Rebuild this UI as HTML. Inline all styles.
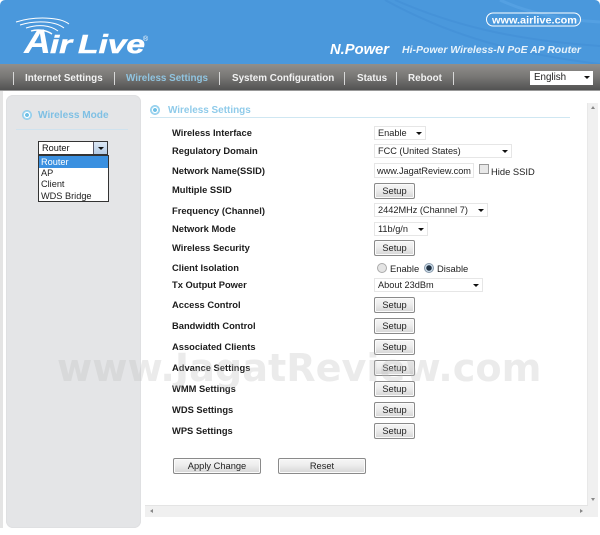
<!DOCTYPE html>
<html><head><meta charset="utf-8">
<style>
html,body{margin:0;padding:0;background:#fff}
#p{position:relative;width:600px;height:535px;overflow:hidden;background:#fff;font-family:"Liberation Sans",Arial,sans-serif;color:#111;filter:blur(.3px)}
#p>*,.a{position:absolute}
.t{white-space:nowrap}
.l{left:172px;font-size:9.35px;font-weight:bold;line-height:12px;white-space:nowrap;color:#1c1c1c}
.s{left:374px;width:40px;height:14px;box-sizing:border-box;background:#fff;border:1px solid #e6e6e6;font-size:9.2px;line-height:13px;padding-left:3px;white-space:nowrap;color:#222}
.s:after{content:"";position:absolute;right:3px;top:5px;border:3px solid transparent;border-top:3px solid #111;border-bottom:0}
.b{left:374px;width:41px;height:16px;box-sizing:border-box;border:1px solid #8a8a8a;border-radius:2px;background:linear-gradient(#f6f6f6,#ededed 45%,#d6d6d6);box-shadow:inset 0 0 0 1px #fbfbfb;font-size:9.3px;line-height:15px;text-align:center;color:#222}
.n{top:72px;font-size:9.85px;font-weight:bold;line-height:13px;color:#f2f2f2;white-space:nowrap}
.sep{top:72px;width:1px;height:13px;background:#d8d8d8}
.r{width:10px;height:10px;border-radius:50%;box-sizing:border-box}
.ic{width:10px;height:10px;border-radius:50%;border:1px solid #8fcdec;box-sizing:border-box;background:radial-gradient(circle,#6fc0e6 0 1.8px,#fff 2.1px 2.9px,#a9daf1 3.2px)}
</style></head><body><div id="p">

<div style="left:0;top:0;width:600px;height:65px;background:#4a98dc;border-radius:5px 5px 0 0"></div>
<svg style="left:0;top:0" width="600" height="65">
<defs><linearGradient id="f" x1="0" y1="0" x2="0" y2="1"><stop offset="0" stop-color="#fff"/><stop offset=".8" stop-color="#fff"/><stop offset="1" stop-color="#a9d0f0"/></linearGradient></defs>
<g fill="none" stroke="#4592d8" stroke-width="2"><path d="M385 0C440 30 500 52 600 64"/><path d="M395 0C450 24 510 40 600 46"/></g>
<g fill="none" stroke="#54a0e2" stroke-width="3"><path d="M500 0C530 14 565 20 600 22"/></g>
<g fill="none" stroke="#fff" stroke-width="1"><path d="M16 22C35 16 60 17 69 24"/><path d="M20 25C36 20 55 21 64 28"/><path d="M26 28C38 24 50 25 58 31"/><path d="M31 31C38 29 46 30 52 34" stroke-width="1.4"/></g>
<text x="24" y="53" font-family="Liberation Sans" font-size="34" font-weight="bold" font-style="italic" fill="url(#f)" textLength="27" lengthAdjust="spacingAndGlyphs">A</text>
<text x="50" y="53" font-family="Liberation Sans" font-size="25" font-weight="bold" font-style="italic" fill="url(#f)" stroke="#fff" stroke-width=".5" textLength="22" lengthAdjust="spacingAndGlyphs">ir</text>
<text x="78" y="53" font-family="Liberation Sans" font-size="26" font-weight="bold" font-style="italic" fill="url(#f)" stroke="#fff" stroke-width=".5" textLength="67" lengthAdjust="spacingAndGlyphs">Live</text>
<text x="143" y="41" font-family="Liberation Sans" font-size="7" fill="#fff">®</text>
<rect x="486.5" y="13" width="94" height="13" rx="6.5" fill="none" stroke="#fff" stroke-width="1"/>
<text x="492" y="23.5" font-family="Liberation Sans" font-size="10.5" font-weight="bold" fill="#fff" textLength="85" lengthAdjust="spacingAndGlyphs">www.airlive.com</text>
<text x="330" y="54" font-family="Liberation Sans" font-size="14.5" font-weight="bold" font-style="italic" fill="#fff" textLength="59" lengthAdjust="spacingAndGlyphs">N.Power</text>
<text x="402" y="53" font-family="Liberation Sans" font-size="10.5" font-weight="bold" font-style="italic" fill="#e8f3fb" textLength="179" lengthAdjust="spacingAndGlyphs">Hi-Power Wireless-N PoE AP Router</text>
</svg>

<div style="left:0;top:64px;width:600px;height:26px;background:linear-gradient(#908f8c,#777674 50%,#525252)"></div>
<div style="left:0;top:90px;width:600px;height:1px;background:#999"></div>
<div class="sep" style="left:13px"></div>
<div class="n" style="left:25px">Internet Settings</div>
<div class="sep" style="left:114px"></div>
<div class="n" style="left:126px;color:#90c4e0">Wireless Settings</div>
<div class="sep" style="left:219px"></div>
<div class="n" style="left:232px">System Configuration</div>
<div class="sep" style="left:344px"></div>
<div class="n" style="left:357px">Status</div>
<div class="sep" style="left:396px"></div>
<div class="n" style="left:408px">Reboot</div>
<div class="sep" style="left:453px"></div>
<div class="s" style="left:530px;top:71px;width:63px;height:14px;border:0;line-height:14px;font-size:9.8px;padding-left:4px">English</div>

<div style="left:0;top:91px;width:3px;height:440px;background:#e4e4e4"></div>
<div style="left:0;top:528px;width:600px;height:7px;background:#fff"></div>

<div style="left:6px;top:95px;width:135px;height:433px;background:#e4e5e7;border-radius:7px;box-shadow:inset 0 0 0 1px #dfe0e2"></div>
<div class="ic" style="left:22px;top:110px"></div>
<div class="t" style="left:38px;top:109px;font-size:10.1px;font-weight:bold;line-height:14px;color:#7fc0e4">Wireless Mode</div>
<div style="left:16px;top:129px;width:112px;height:1px;background:#cfe2ee"></div>

<div style="left:38px;top:141px;width:70px;height:14px;box-sizing:border-box;border:1px solid #333;background:#fff;font-size:9.2px;line-height:13px;padding-left:3px">Router
<div class="a" style="right:0;top:0;width:13px;height:12px;background:linear-gradient(#dce8f5,#b4cbe4);border-left:1px solid #556"></div>
<div class="a" style="right:3px;top:5px;border:3px solid transparent;border-top:3px solid #111;border-bottom:0"></div></div>
<div style="left:38px;top:155px;width:71px;height:47px;box-sizing:border-box;border:1px solid #333;background:#fff;font-size:9.2px;line-height:11.3px;color:#222">
<div style="background:#3a90e0;color:#fff;padding-left:2px;height:12px;line-height:12px">Router</div>
<div style="padding-left:2px">AP</div><div style="padding-left:2px">Client</div><div style="padding-left:2px">WDS Bridge</div></div>

<div class="ic" style="left:150px;top:105px"></div>
<div class="t" style="left:168px;top:104px;font-size:9.95px;font-weight:bold;line-height:14px;color:#8fcbea">Wireless Settings</div>
<div style="left:150px;top:117px;width:420px;height:1px;background:#cfe7f2"></div>

<div class="l" style="top:127px">Wireless Interface</div>
<div class="l" style="top:145px">Regulatory Domain</div>
<div class="l" style="top:165px">Network Name(SSID)</div>
<div class="l" style="top:184px">Multiple SSID</div>
<div class="l" style="top:205px">Frequency (Channel)</div>
<div class="l" style="top:223px">Network Mode</div>
<div class="l" style="top:242px">Wireless Security</div>
<div class="l" style="top:262px">Client Isolation</div>
<div class="l" style="top:279px">Tx Output Power</div>
<div class="l" style="top:299px">Access Control</div>
<div class="l" style="top:320px">Bandwidth Control</div>
<div class="l" style="top:341px">Associated Clients</div>
<div class="l" style="top:362px">Advance Settings</div>
<div class="l" style="top:383px">WMM Settings</div>
<div class="l" style="top:404px">WDS Settings</div>
<div class="l" style="top:425px">WPS Settings</div>

<div class="s" style="top:126px;width:52px">Enable</div>
<div class="s" style="top:144px;width:138px">FCC (United States)</div>
<div class="t" style="left:374px;top:163px;width:100px;height:15px;box-sizing:border-box;border:1px solid #e6e6e6;font-size:9.2px;line-height:14px;padding-left:2px;color:#222">www.JagatReview.com</div>
<div style="left:479px;top:164px;width:10px;height:10px;box-sizing:border-box;border:1px solid #999;background:#e8e8e8"></div>
<div class="t" style="left:491px;top:165px;font-size:9.4px;line-height:14px;color:#222">Hide SSID</div>
<div class="b" style="top:183px">Setup</div>
<div class="s" style="top:203px;width:114px">2442MHz (Channel 7)</div>
<div class="s" style="top:222px;width:54px">11b/g/n</div>
<div class="b" style="top:240px">Setup</div>
<div class="r" style="left:377px;top:263px;border:1px solid #aaa;background:#e4e4e4"></div>
<div class="t" style="left:390px;top:262px;font-size:9.4px;line-height:14px;color:#222">Enable</div>
<div class="r" style="left:424px;top:263px;border:1px solid #89a;background:radial-gradient(circle,#234 0 2.5px,#cfe0ee 3px)"></div>
<div class="t" style="left:437px;top:262px;font-size:9.4px;line-height:14px;color:#222">Disable</div>
<div class="s" style="top:278px;width:109px">About 23dBm</div>
<div class="b" style="top:297px">Setup</div>
<div class="b" style="top:318px">Setup</div>
<div class="b" style="top:339px">Setup</div>
<div class="b" style="top:360px">Setup</div>
<div class="b" style="top:381px">Setup</div>
<div class="b" style="top:402px">Setup</div>
<div class="b" style="top:423px">Setup</div>
<div class="b" style="left:173px;top:458px;width:88px">Apply Change</div>
<div class="b" style="left:278px;top:458px;width:88px">Reset</div>

<div class="t" style="left:57px;top:347px;font:bold 38.2px/44px 'DejaVu Sans',sans-serif;color:rgba(190,190,190,.3)">www.JagatReview.com</div>

<div style="left:588px;top:103px;width:10px;height:402px;background:#f0f0f0"></div>
<div style="left:145px;top:505px;width:453px;height:12px;background:#f0f0f0"></div>
<div style="left:145px;top:505px;width:443px;height:1px;background:#e4e4e4"></div>
<div style="left:587px;top:103px;width:1px;height:402px;background:#e8e8e8"></div>
<div style="left:591px;top:106px;border:2px solid transparent;border-bottom:3px solid #888;border-top:0"></div>
<div style="left:591px;top:498px;border:2px solid transparent;border-top:3px solid #888;border-bottom:0"></div>
<div style="left:150px;top:509px;border:2px solid transparent;border-right:3px solid #888;border-left:0"></div>
<div style="left:580px;top:509px;border:2px solid transparent;border-left:3px solid #888;border-right:0"></div>
</div></body></html>
